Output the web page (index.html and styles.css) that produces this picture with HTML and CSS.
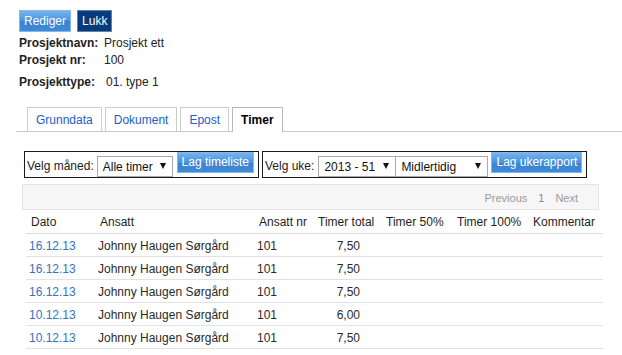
FILE: index.html
```html
<!DOCTYPE html>
<html lang="no">
<head>
  <meta charset="UTF-8" />
  <title>Prosjekt ett - Timer</title>
  <link rel="stylesheet" href="styles.css">
</head>
<body>

<div class="actions">
  <button class="btn btn-light">Rediger</button>
  <button class="btn btn-dark">Lukk</button>
</div>

<div class="info">
  <div class="info-row"><span class="info-label">Prosjektnavn:</span><span class="info-value">Prosjekt ett</span></div>
  <div class="info-row"><span class="info-label">Prosjekt nr:</span><span class="info-value">100</span></div>
  <div class="info-row info-row-type"><span class="info-label">Prosjekttype:</span><span class="info-value">01. type 1</span></div>
</div>

<ul class="tabs">
  <li class="tab"><a href="#">Grunndata</a></li>
  <li class="tab"><a href="#">Dokument</a></li>
  <li class="tab"><a href="#">Epost</a></li>
  <li class="tab active"><a href="#">Timer</a></li>
</ul>

<div class="filters">
  <div class="filter-box filter-box-month">
    <span class="filter-label">Velg måned:</span>
    <span class="select select-month">Alle timer<span class="arrow"></span></span>
    <button class="btn btn-light btn-filter btn-month">Lag timeliste</button>
  </div>
  <div class="filter-box filter-box-week">
    <span class="filter-label">Velg uke:</span>
    <span class="select select-week">2013 - 51<span class="arrow"></span></span>
    <span class="select select-type">Midlertidig<span class="arrow"></span></span>
    <button class="btn btn-light btn-filter btn-week">Lag ukerapport</button>
  </div>
</div>

<div class="pager">
  <span>Previous</span>
  <span class="page-current">1</span>
  <span>Next</span>
</div>

<table class="hours">
  <colgroup>
    <col class="c-date"><col class="c-name"><col class="c-nr"><col class="c-total"><col class="c-50"><col class="c-100"><col class="c-comment">
  </colgroup>
  <thead>
    <tr>
      <th>Dato</th>
      <th>Ansatt</th>
      <th>Ansatt nr</th>
      <th>Timer total</th>
      <th>Timer 50%</th>
      <th>Timer 100%</th>
      <th>Kommentar</th>
    </tr>
  </thead>
  <tbody>
    <tr><td><a href="#">16.12.13</a></td><td>Johnny Haugen Sørgård</td><td>101</td><td class="num">7,50</td><td></td><td></td><td></td></tr>
    <tr><td><a href="#">16.12.13</a></td><td>Johnny Haugen Sørgård</td><td>101</td><td class="num">7,50</td><td></td><td></td><td></td></tr>
    <tr><td><a href="#">16.12.13</a></td><td>Johnny Haugen Sørgård</td><td>101</td><td class="num">7,50</td><td></td><td></td><td></td></tr>
    <tr><td><a href="#">10.12.13</a></td><td>Johnny Haugen Sørgård</td><td>101</td><td class="num">6,00</td><td></td><td></td><td></td></tr>
    <tr><td><a href="#">10.12.13</a></td><td>Johnny Haugen Sørgård</td><td>101</td><td class="num">7,50</td><td></td><td></td><td></td></tr>
  </tbody>
</table>

</body>
</html>
```

FILE: styles.css
```css
body {
  margin: 0;
  font-family: "Liberation Sans", Arial, sans-serif;
  font-size: 12px;
  color: #222;
  background: #fff;
}

a {
  text-decoration: none;
}

.actions {
  display: flex;
  gap: 6px;
  padding: 10px 0 0 19px;
}

.btn {
  height: 22px;
  padding: 0 4px;
  font-family: inherit;
  font-size: 12px;
  color: #fff;
  white-space: nowrap;
  cursor: pointer;
}

.btn-light {
  background: linear-gradient(#74b3ee, #4a93dd 50%, #3a83d2 51%, #3f8ad6);
  border: 1px solid #86b8e6;
}

.btn-dark {
  background: #083b7a;
  border: 1px solid #5d82b8;
}

.info {
  margin: 4px 0 0 19px;
}

.info-row {
  display: flex;
  line-height: 14px;
  margin-top: 3px;
}

.info-row:first-child {
  margin-top: 0;
}

.info-row-type {
  margin-top: 8px;
}

.info-label {
  width: 85px;
  font-weight: bold;
}

.info-row-type .info-value {
  padding-left: 2px;
}

.tabs {
  display: flex;
  align-items: flex-end;
  gap: 3px;
  list-style: none;
  margin: 18px 0 0 16px;
  padding: 0 0 0 11px;
  border-bottom: 1px solid #c8c8c8;
}

.tab {
  height: 23px;
  line-height: 24px;
  padding: 0 8px;
  border: 1px solid #cdcdcd;
  border-bottom: none;
}

.tab a {
  color: #2160c4;
}

.tab.active {
  height: 24px;
  margin-bottom: -1px;
  border-color: #b8b8b8;
  background: #fff;
}

.tab.active a {
  color: #000;
  font-weight: bold;
}

.filters {
  display: flex;
  gap: 3px;
  margin: 19px 0 0 24px;
}

.filter-box {
  display: flex;
  flex-shrink: 0;
  align-items: flex-end;
  box-sizing: border-box;
  height: 27px;
  padding: 0 2px;
  border: 1px solid #1a1a1a;
}

.filter-box-month { width: 235px; }
.filter-box-week { width: 325px; }

.filter-box > * {
  flex-shrink: 0;
}

.filter-label {
  line-height: 21px;
  margin-right: 3px;
}

.filter-box-week .filter-label {
  margin-right: 4px;
}

.select {
  display: flex;
  align-items: center;
  justify-content: space-between;
  box-sizing: border-box;
  height: 21px;
  padding: 0 6px 0 5px;
  border: 1px solid #aaa;
  color: #111;
  background: #fff;
}

.select-month { width: 76px; }
.select-week { width: 78px; }
.select-type { width: 93px; margin-left: -1px; }

.arrow {
  width: 0;
  height: 0;
  margin-top: -2px;
  border-left: 3px solid transparent;
  border-right: 3px solid transparent;
  border-top: 6px solid #111;
}

.btn-filter {
  align-self: flex-start;
  height: 21px;
  margin-left: 4px;
  padding: 0 0 1px;
}

.btn-month { width: 77px; }

.btn-week {
  width: 91px;
  margin-left: 3px;
}

.pager {
  display: flex;
  justify-content: flex-end;
  gap: 11px;
  box-sizing: border-box;
  width: 577px;
  height: 26px;
  margin: 6px 0 0 22px;
  padding: 3px 20px 0 0;
  line-height: 21px;
  font-size: 11px;
  color: #9a9a9a;
  background: #f6f6f6;
  border: 1px solid #e4e4e4;
}

.page-current {
  color: #888;
}

.hours {
  width: 577px;
  margin: 1px 0 0 26px;
  border-collapse: collapse;
  table-layout: fixed;
}

.c-date { width: 69px; }
.c-name { width: 159px; }
.c-nr { width: 59px; }
.c-total { width: 68px; }
.c-50 { width: 71px; }
.c-100 { width: 76px; }
.c-comment { width: 75px; }

.hours th {
  height: 22px;
  padding: 0 0 0 5px;
  text-align: left;
  font-weight: normal;
  color: #1e1e1e;
  border-bottom: 1px solid #dcdcdc;
  white-space: nowrap;
}

.hours td {
  height: 23px;
  padding: 1px 0 0 3px;
  box-sizing: border-box;
  color: #2a2a2a;
  border-bottom: 1px solid #e2e2e2;
  white-space: nowrap;
}

.hours td a {
  color: #3273c4;
}

.hours td.num {
  text-align: right;
  padding-right: 21px;
}
```
